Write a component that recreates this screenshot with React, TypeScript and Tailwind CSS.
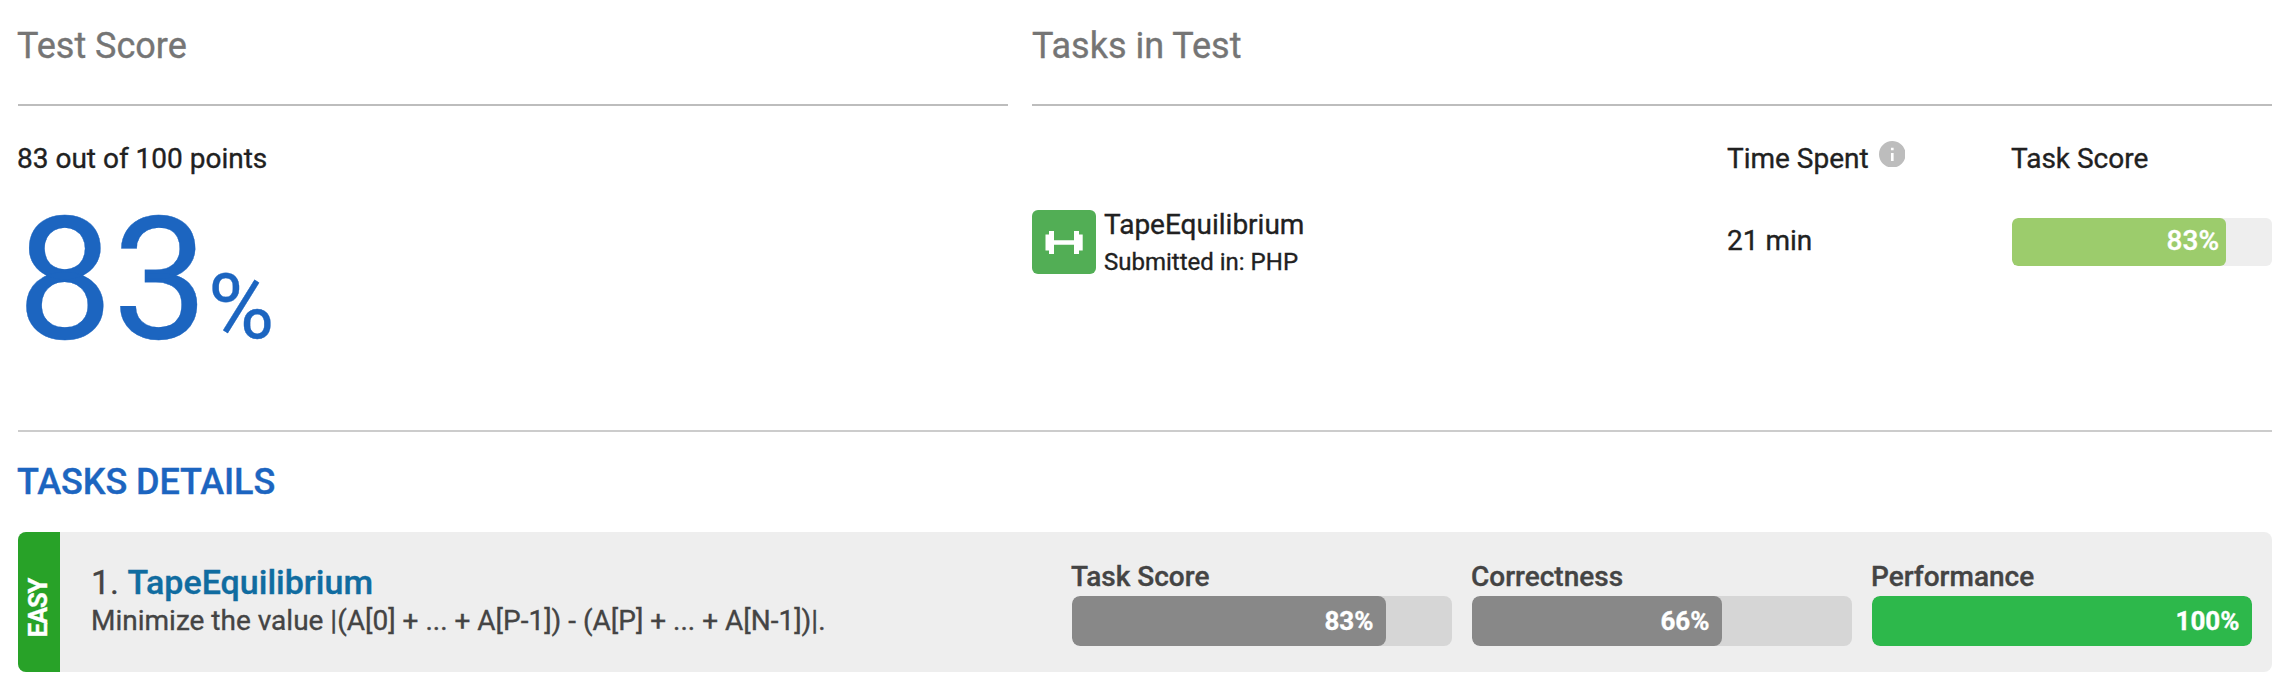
import type { ReactNode } from "react";

type MeterProps = {
  label: string;
  value: string;
  fill: string;
};

function DumbbellIcon() {
  return (
    <svg className="block h-16 w-16" viewBox="0 0 64 64" fill="#fff">
      <path d="M13.5 24.5H17V21h5v9.2h20V21h5v3.5h3.7v16H47V44h-5v-9.2H22V44h-5v-3.5h-3.5z" />
    </svg>
  );
}

function InfoIcon() {
  return (
    <svg className="block h-[26.6px] w-[26.6px]" viewBox="2 2 20 20" fill="#bdbdbd">
      <path d="M12 2C6.48 2 2 6.48 2 12s4.48 10 10 10 10-4.48 10-10S17.52 2 12 2zm1 15h-2v-6h2v6zm0-8h-2V7h2v2z" />
    </svg>
  );
}

function Heading({ children }: { children: ReactNode }) {
  return (
    <h2 className="h-[106px] border-b-2 border-[#bdbdbd] pt-[26px] text-[36px] leading-[40px] text-[#757575]">
      {children}
    </h2>
  );
}

function Meter({ label, value, fill }: MeterProps) {
  return (
    <div className="w-[380px]">
      <div className="-ml-px h-[40px] pt-px text-[28px] leading-[40px] font-medium">{label}</div>
      <div className="h-[50px] overflow-hidden rounded-lg bg-[#d6d6d6]">
        <div className={`flex h-full items-center justify-end rounded-lg pr-[12.5px] text-[26px] font-bold text-white ${fill}`}>
          {value}
        </div>
      </div>
    </div>
  );
}

export default function App() {
  return (
    <main className="h-[686px] w-[2284px] overflow-hidden bg-white pr-3 pl-[18px] font-['Roboto',sans-serif] whitespace-nowrap text-[#212121] [-webkit-text-stroke:0.35px_currentColor]">
      <div className="flex h-[430px] gap-6">
        <section className="w-[990px]">
          <Heading>
            <span className="-ml-px">Test Score</span>
          </Heading>
          <p className="mt-[33px] -ml-px text-[28px] leading-[40px]">83 out of 100 points</p>
          <p className="mt-4 -ml-px text-[170px] leading-[170px] text-[#1c65c0]">
            83<span className="text-[90.5px] leading-[0]">%</span>
          </p>
        </section>
        <section className="w-[1240px]">
          <Heading>Tasks in Test</Heading>
          <div className="grid grid-cols-[695px_285px_260px] text-[28px] leading-[40px]">
            <div />
            <div className="flex pt-[33px]">
              Time Spent
              <span className="mt-[1.5px] ml-[10px]">
                <InfoIcon />
              </span>
            </div>
            <div className="-ml-px pt-[33px]">Task Score</div>
            <div className="flex pt-[31px]">
              <span className="h-16 w-16 rounded-md bg-[#52ae55]">
                <DumbbellIcon />
              </span>
              <div className="ml-2">
                <div className="-mt-[5px] h-[39px]">TapeEquilibrium</div>
                <div className="text-[24px] leading-[36px]">Submitted in: PHP</div>
              </div>
            </div>
            <div className="pt-[42px]">21 min</div>
            <div className="pt-[39px]">
              <div className="h-12 overflow-hidden rounded-md bg-[#eeeeee]">
                <div className="h-12 w-[214px] rounded-md bg-[#9ccc6c] pt-[3px] pr-[7px] text-right font-medium text-white">83%</div>
              </div>
            </div>
          </div>
        </section>
      </div>
      <section className="border-t-2 border-[#cccccc]">
        <h2 className="mt-[30px] -ml-px text-[36px] leading-[40px] font-medium tracking-[-0.08px] text-[#1c65c0]">TASKS DETAILS</h2>
        <article className="mt-[30px] flex h-[140px] overflow-hidden rounded-lg bg-[#eeeeee] text-[#444444]">
          <div className="flex w-[42px] items-center justify-center bg-[#28a228] text-white">
            <span className="mt-[12px] mr-[3px] rotate-180 text-[25.5px] leading-[30px] font-bold tracking-[-1.2px] [writing-mode:vertical-rl]">EASY</span>
          </div>
          <div className="ml-[31px] w-[981px]">
            <h3 className="mt-[30px] text-[34px] leading-[40px]">
              1. <a className="font-medium text-[#106ca0]">TapeEquilibrium</a>
            </h3>
            <p className="pt-px text-[28px] leading-[36px]">Minimize the value |(A[0] + ... + A[P-1]) - (A[P] + ... + A[N-1])|.</p>
          </div>
          <div className="flex gap-5 pt-6">
            <Meter label="Task Score" value="83%" fill="w-[314px] bg-[#888888]" />
            <Meter label="Correctness" value="66%" fill="w-[250px] bg-[#888888]" />
            <Meter label="Performance" value="100%" fill="w-[380px] bg-[#2db84b]" />
          </div>
        </article>
      </section>
    </main>
  );
}
